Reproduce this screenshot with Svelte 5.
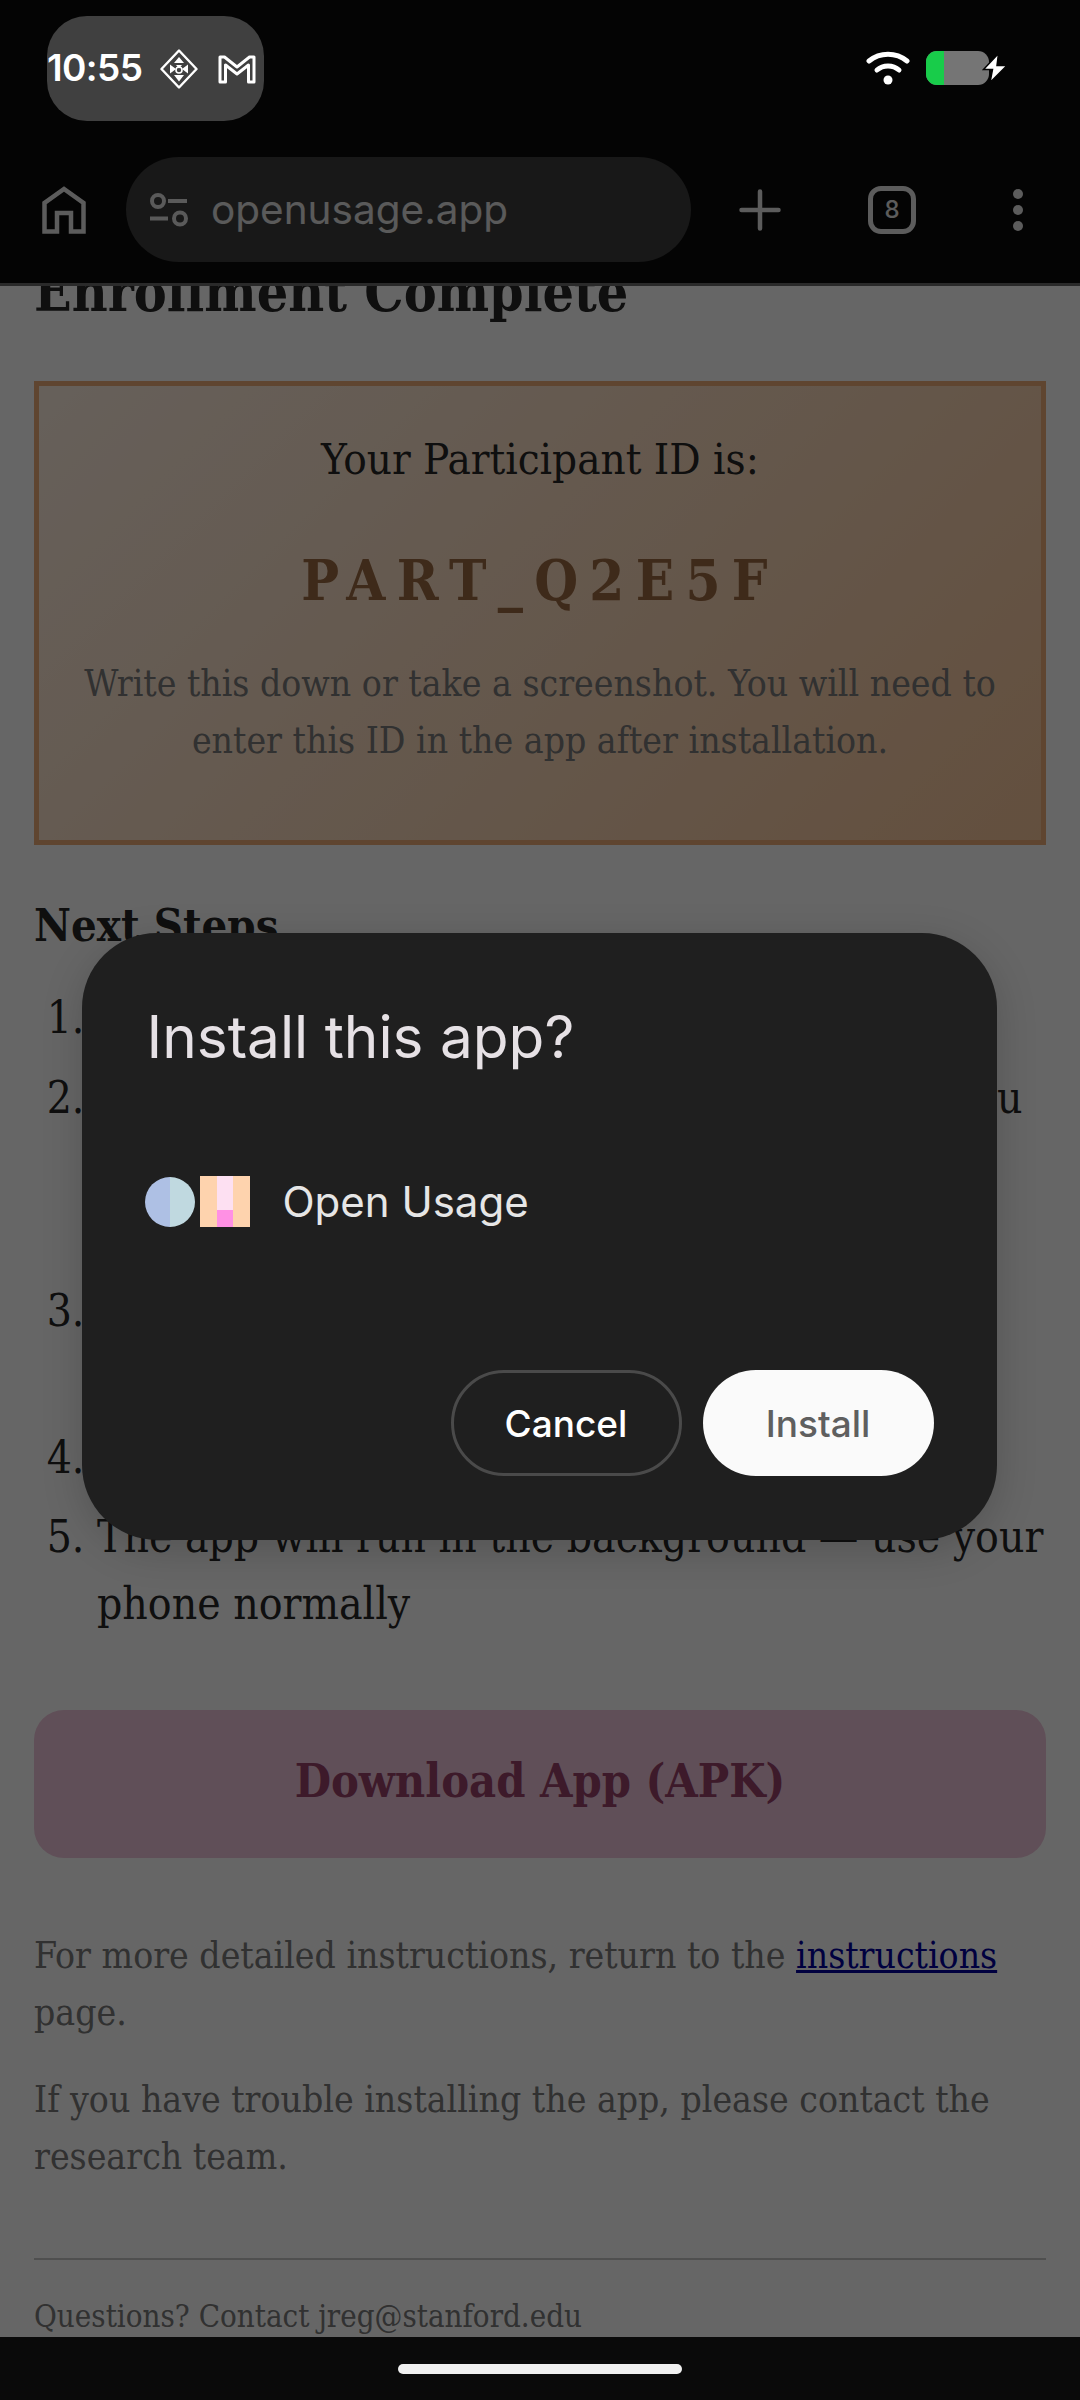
<script lang="ts">
  const steps = [
    "Make sure your phone is connected to Wi-Fi",
    "Use the button below to get the file. Once you have it, tap Install and allow the app installation when your phone asks",
    "Follow the on-screen prompts to complete installation and enter your ID",
    "Grant the permissions that the app requests",
    "The app will run in the background — use your phone normally"
  ];
</script>

<div class="screen">
  <div class="status">
    <div class="pill">
      <span class="time">10:55</span>
      <svg class="diamond" viewBox="0 0 38 40" width="38" height="40" aria-hidden="true">
        <path d="M19 1.500 36.500 20 19 38.500 1.500 20Z" fill="none" stroke="#fff" stroke-width="2.400" stroke-linejoin="round" />
        <path d="M19 8 24 14H14ZM10 15.500 16 20 10 24.500ZM28 15.500V24.500L22 20ZM14 26H24L19 32.500ZM16 16H22L19 19.500Z" fill="#fff" />
        <circle cx="19" cy="21" r="3" fill="none" stroke="#fff" stroke-width="1.600" />
      </svg>
      <svg class="gmail" viewBox="0 0 38 30" width="38" height="30" aria-hidden="true">
        <path d="M2 3H6.500L19 13 31.500 3H36V28H30.500V11L19 20 7.500 11V28H2Z" fill="none" stroke="#fff" stroke-width="3" stroke-linejoin="round" />
      </svg>
    </div>
    <div class="sys">
      <svg viewBox="0 0 44 34" width="44" height="34" aria-hidden="true">
        <path d="M3 10C14 1 30 1 41 10" fill="none" stroke="#fff" stroke-width="5" stroke-linecap="round" />
        <path d="M11 19C17 13.500 27 13.500 33 19" fill="none" stroke="#fff" stroke-width="5" stroke-linecap="round" />
        <circle cx="22" cy="29" r="4.500" fill="#fff" />
      </svg>
      <div class="battery"><div class="charge"></div></div>
      <svg class="bolt" viewBox="0 0 26 30" width="26" height="30" aria-hidden="true">
        <path d="M16.500 0.500 1.500 16.500H10.500L8 29.500 25 12.500H15Z" fill="#fff" stroke="#040404" stroke-width="1.500" />
      </svg>
    </div>
  </div>

  <div class="browser">
    <div class="toolbar">
      <svg class="home" viewBox="0 0 44 48" width="44" height="48" aria-hidden="true">
        <path d="M2.500 45.500V17L22 3 41.500 17V45.500H29V27H15V45.500Z" fill="none" stroke="#e6e6e6" stroke-width="4.500" />
      </svg>
      <div class="address">
        <svg viewBox="0 0 40 34" width="40" height="34" aria-hidden="true">
          <circle cx="9" cy="8" r="6" fill="none" stroke="#e0e0e0" stroke-width="4" />
          <path d="M19 8H38M1 25.500H19" stroke="#e0e0e0" stroke-width="4" />
          <circle cx="31" cy="25.500" r="6" fill="none" stroke="#e0e0e0" stroke-width="4" />
        </svg>
        <span>openusage.app</span>
      </div>
      <svg class="plus" viewBox="0 0 42 42" width="42" height="42" aria-hidden="true">
        <path d="M21 2.500V39.500M2.500 21H39.500" stroke="#e6e6e6" stroke-width="4.500" stroke-linecap="round" />
      </svg>
      <div class="tabs">8</div>
      <div class="dots"><i></i><i></i><i></i></div>
    </div>

    <main class="page">
      <h1>Enrollment Complete</h1>
      <section class="id-box">
        <p class="id-label">Your Participant ID is:</p>
        <p class="id-value">PART_Q2E5F</p>
        <p class="note">Write this down or take a screenshot. You will need to enter this ID in the app after installation.</p>
      </section>
      <h2>Next Steps</h2>
      <ol>
        {#each steps as step}
          <li>{step}</li>
        {/each}
      </ol>
      <div class="download">Download App (APK)</div>
      <p class="small">For more detailed instructions, return to the <a href="#top">instructions</a> page.</p>
      <p class="small second">If you have trouble installing the app, please contact the research team.</p>
      <hr />
      <p class="contact">Questions? Contact jreg@stanford.edu</p>
    </main>

    <div class="scrim">
      <div class="dialog" role="dialog" aria-label="Install this app?">
        <div class="title">Install this app?</div>
        <div class="app-row">
          <div class="circle"></div>
          <div class="tile"><div class="tile-mid"></div></div>
          <span>Open Usage</span>
        </div>
        <div class="actions">
          <button class="cancel">Cancel</button>
          <button class="install">Install</button>
        </div>
      </div>
    </div>
  </div>

  <div class="nav"><div class="handle"></div></div>
</div>

<style>
  :global(body) {
    margin: 0;
    background: #000;
  }
  .screen {
    width: 1080px;
    height: 2400px;
    display: flex;
    flex-direction: column;
    overflow: hidden;
    font-family: "DejaVu Serif Condensed", "DejaVu Serif", serif;
    background: #fff;
  }
  .status {
    flex: 0 0 121px;
    box-sizing: border-box;
    padding: 16px 72px 0 47px;
    display: flex;
    justify-content: space-between;
    align-items: flex-start;
    background: #040404;
  }
  .pill {
    width: 217px;
    height: 105px;
    border-radius: 40px;
    background: #404040;
    display: flex;
    align-items: center;
    font-family: Inter, sans-serif;
  }
  .time {
    color: #fff;
    font-size: 37px;
    font-weight: 600;
    letter-spacing: -0.6px;
    width: 112px;
    margin-top: -2px;
  }
  .diamond {
    margin-left: 1px;
  }
  .gmail {
    margin-left: 20px;
  }
  .sys {
    display: flex;
    align-items: center;
    height: 36px;
    margin-top: 34px;
  }
  .battery {
    width: 63px;
    height: 34px;
    margin-left: 16px;
    border-radius: 11px;
    background: #757575;
    overflow: hidden;
  }
  .charge {
    width: 18px;
    height: 100%;
    background: #18cc4a;
  }
  .bolt {
    margin-left: -7px;
  }
  .browser {
    flex: 1;
    min-height: 0;
    display: flex;
    flex-direction: column;
    position: relative;
  }
  .toolbar {
    flex: 0 0 auto;
    height: 165px;
    box-sizing: border-box;
    padding: 36px 0 21px 42px;
    display: flex;
    align-items: center;
    background: #0a0a0a;
    border-bottom: 3px solid #6a6a6a;
    position: relative;
    z-index: 1;
  }
  .address {
    width: 565px;
    height: 105px;
    margin-left: 40px;
    box-sizing: border-box;
    padding-left: 23px;
    display: flex;
    align-items: center;
    gap: 22px;
    border-radius: 53px;
    background: #3c3c3c;
    color: #e0e0e0;
    font-family: Inter, sans-serif;
    font-size: 40.500px;
  }
  .plus {
    margin-left: 48px;
  }
  .tabs {
    width: 48px;
    height: 48px;
    margin-left: 87px;
    box-sizing: border-box;
    border: 5px solid #e6e6e6;
    border-radius: 13px;
    color: #e6e6e6;
    font-family: Inter, sans-serif;
    font-size: 24px;
    font-weight: 500;
    display: flex;
    align-items: center;
    justify-content: center;
  }
  .dots {
    margin-left: 97px;
    display: flex;
    flex-direction: column;
    gap: 6px;
  }
  .dots i {
    width: 10px;
    height: 10px;
    border-radius: 50%;
    background: #e6e6e6;
  }
  .page {
    flex: 1;
    min-height: 0;
    overflow: hidden;
    padding: 0 34px;
    color: #262626;
    background: #fff;
  }
  h1 {
    margin: -24px 0 59px;
    font-size: 55px;
    line-height: 60px;
    font-weight: 700;
    white-space: nowrap;
  }
  .id-box {
    height: 464px;
    box-sizing: border-box;
    padding: 40px 40px;
    border: 5px solid #eeac78;
    background: linear-gradient(135deg, #fff0e2, #f8c79c);
    text-align: center;
  }
  .id-box p {
    margin: 0;
  }
  .id-label {
    font-size: 43.500px;
    line-height: 67px;
    white-space: nowrap;
  }
  .id-value {
    margin-top: 52px !important;
    font-size: 56px;
    line-height: 70px;
    font-weight: 700;
    letter-spacing: 11.300px;
    color: #9c6a42;
  }
  .note {
    margin-top: 40px !important;
    font-size: 37px;
    line-height: 57px;
    color: #7a7a7a;
  }
  h2 {
    margin: 51px 0 28px;
    font-size: 45px;
    line-height: 60px;
    font-weight: 700;
  }
  ol {
    margin: 0;
    padding: 0 0 0 63px;
  }
  li {
    font-size: 44px;
    line-height: 67px;
    margin-bottom: 12.500px;
  }
  .download {
    margin-top: 73px;
    height: 148px;
    box-sizing: border-box;
    padding-bottom: 8px;
    display: flex;
    align-items: center;
    justify-content: center;
    border-radius: 30px;
    background: #f0c6dc;
    color: #984169;
    font-size: 46.500px;
    font-weight: 700;
  }
  .small {
    margin: 69px 0 0;
    font-size: 37px;
    line-height: 57px;
    color: #7a7a7a;
  }
  .second {
    margin-top: 30px;
  }
  a {
    color: #00009e;
  }
  hr {
    margin: 73px 0 0;
    height: 2px;
    border: 0;
    background: #c6c6c6;
  }
  .contact {
    margin: 31px 0 0;
    font-size: 31px;
    line-height: 50px;
    color: #7a7a7a;
  }
  .scrim {
    position: absolute;
    inset: 0;
    z-index: 2;
    box-sizing: border-box;
    padding: 15px 2px 0 0;
    display: flex;
    align-items: center;
    justify-content: center;
    background: rgba(0, 0, 0, 0.6);
  }
  .dialog {
    width: 915px;
    height: 607px;
    box-sizing: border-box;
    padding: 64px 63px 64px 65px;
    display: flex;
    flex-direction: column;
    border-radius: 75px;
    background: #1f1f1f;
    box-shadow: 0 10px 40px rgba(0, 0, 0, 0.18);
    font-family: Inter, sans-serif;
  }
  .title {
    font-size: 58.500px;
    line-height: 80px;
    color: #e6e1e5;
  }
  .app-row {
    margin-top: 99px;
    margin-left: -2px;
    display: flex;
    align-items: center;
    color: #e6e6e6;
    font-size: 42px;
  }
  .circle {
    width: 50px;
    height: 50px;
    border-radius: 50%;
    background: linear-gradient(90deg, #aec0e4 50%, #c0d9e0 50%);
  }
  .tile {
    width: 50px;
    height: 51px;
    margin-left: 5px;
    background: #fed3ae;
    display: flex;
    justify-content: center;
  }
  .tile-mid {
    width: 16px;
    height: 100%;
    background: linear-gradient(#fde0f2 34px, #ff90e4 34px);
  }
  .app-row span {
    margin-left: 33px;
  }
  .actions {
    margin-top: auto;
    display: flex;
    justify-content: flex-end;
    gap: 21px;
  }
  button {
    width: 231px;
    height: 106px;
    padding: 0;
    box-sizing: border-box;
    border-radius: 53px;
    font: 500 37px Inter, sans-serif;
  }
  .cancel {
    border: 3px solid #4a4a4a;
    background: transparent;
    color: #fff;
  }
  .install {
    border: 0;
    background: #fafafa;
    color: #5f5f5f;
  }
  .nav {
    flex: 0 0 63px;
    display: flex;
    align-items: flex-start;
    justify-content: center;
    background: #0a0a0a;
    position: relative;
    z-index: 3;
  }
  .handle {
    width: 284px;
    height: 10px;
    margin-top: 27px;
    border-radius: 5px;
    background: #f0f0f0;
  }
</style>
